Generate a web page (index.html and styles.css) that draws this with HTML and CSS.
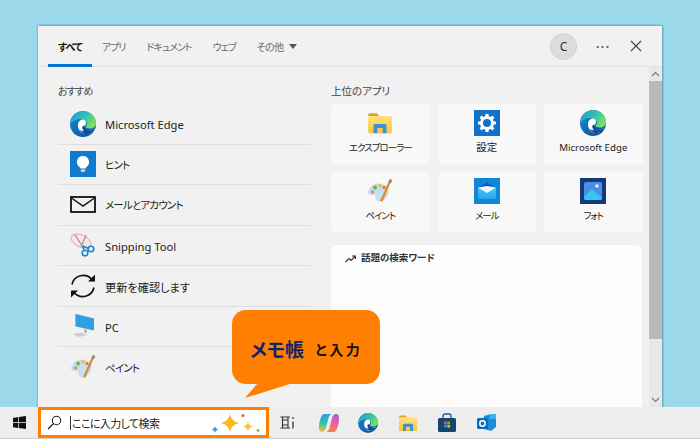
FILE: index.html
```html
<!DOCTYPE html>
<html lang="ja">
<head>
<meta charset="utf-8">
<title>検索</title>
<link rel="stylesheet" href="styles.css">
</head>
<body>
<svg class="defs" width="0" height="0" aria-hidden="true">
  <defs>
    <linearGradient id="edgeTop" x1="0" y1="0" x2="1" y2="0.6"><stop offset="0" stop-color="#1b9ad6"/><stop offset="0.55" stop-color="#35c1b0"/><stop offset="1" stop-color="#7fe05f"/></linearGradient>
    <linearGradient id="edgeBlue" x1="0" y1="0" x2="0.6" y2="1"><stop offset="0" stop-color="#1a8fd8"/><stop offset="1" stop-color="#0c59a4"/></linearGradient>
    <linearGradient id="folder" x1="0" y1="0" x2="0" y2="1"><stop offset="0" stop-color="#ffe27a"/><stop offset="1" stop-color="#fcc43e"/></linearGradient>
    <linearGradient id="mailBg" x1="0" y1="0" x2="0" y2="1"><stop offset="0" stop-color="#4cc4f4"/><stop offset="1" stop-color="#27a4ea"/></linearGradient>
    <linearGradient id="copilot" x1="0" y1="0" x2="0" y2="1"><stop offset="0" stop-color="#2f9be8"/><stop offset="0.55" stop-color="#38c8a0"/><stop offset="1" stop-color="#f7c33a"/></linearGradient>
    <linearGradient id="copilot2" x1="0" y1="0" x2="0" y2="1"><stop offset="0" stop-color="#a85be6"/><stop offset="0.55" stop-color="#f0609a"/><stop offset="1" stop-color="#f7873a"/></linearGradient>
    <symbol id="edge" viewBox="0 0 26 26">
      <circle cx="13" cy="13" r="13" fill="url(#edgeBlue)"/>
      <path d="M1 10C2.500 3.500 8 0 13 0c7 0 13 5 13 12 0 3.500-2.500 5.500-6 5.500-2.500 0-4.500-1-5-2 2-.5 2.500-2.500 1.500-4.500C15 8.500 12 7.500 9 8 5.500 8.500 2.500 10 1 13z" fill="url(#edgeTop)"/>
      <path d="M13.500 8.800c-3 0-5 2.500-5 5.700 0 4 2.300 7.800 6.500 8.800 3.500.6 7.500-1 9.500-4.800-1.300.7-2.800 1-4.300 1-3 0-5.800-1.300-6.200-4 1.300-.4 2.500-1.300 2.500-2.900 0-2.100-1.200-3.800-3-3.800z" fill="#fff" transform="translate(-.5 -.3)"/>
      <path d="M14.300 14.700c.4 3 3.300 4.500 6.400 4.500 1.400 0 2.700-.3 3.800-.9-2 3.800-6 5.400-9.500 4.800-3-.7-5-2.800-6-5.400 1 1.500 3 3 5 2.500-1.500-1-2-3.500-1.500-5z" fill="#0c4f96"/>
    </symbol>
    <symbol id="folderIcon" viewBox="0 0 24 24">
      <path d="M1 5a2 2 0 0 1 2-2h6l2.500 2.500H1z" fill="#e0a31f"/>
      <rect x="1" y="5.500" width="22" height="16" rx="1.500" fill="url(#folder)"/>
      <path d="M6 21.500v-7a1.500 1.500 0 0 1 1.500-1.500h9a1.500 1.500 0 0 1 1.500 1.500v7h-3.500v-5h-5v5z" fill="#3a92d4"/>
    </symbol>
    <symbol id="paint" viewBox="0 0 26 26">
      <path d="M1.500 13C3 7 9 4.500 15 6c4 1 6 3 6.500 6 .5 4-1.500 9-6 11-4 1.500-7-.5-7-3.500 0-2.500-1-2.500-3-2.500-3 0-5-1-4.500-4.500z" fill="#c6dff1"/>
      <circle cx="5.500" cy="14" r="1.800" fill="#ee7f7f"/>
      <circle cx="8" cy="9.500" r="1.900" fill="#62bb46"/>
      <circle cx="13" cy="7.800" r="1.900" fill="#f3bb3b"/>
      <circle cx="17" cy="9.500" r="1.500" fill="#e36b3c"/>
      <path d="M13 23L21 5l2 1-7.500 17.500z" fill="#d98e2b"/>
      <path d="M21 5l1.700-4 2.800 1.300L23 6z" fill="#a97a4e"/>
    </symbol>
  </defs>
</svg>

<main class="desktop">
  <section class="panel">
    <header class="topbar">
      <nav class="tabs">
        <span class="tab active">すべて</span>
        <span class="tab">アプリ</span>
        <span class="tab">ドキュメント</span>
        <span class="tab">ウェブ</span>
        <span class="tab">その他 <i class="caret"></i></span>
      </nav>
      <div class="actions">
        <span class="avatar">C</span>
        <span class="dots">···</span>
        <svg class="close" width="12" height="12" viewBox="0 0 12 12"><path d="M1 1l10 10M11 1L1 11" stroke="#444" stroke-width="1.100" fill="none"/></svg>
      </div>
    </header>
    <div class="content">
      <div class="left">
        <h2 class="heading left-heading">おすすめ</h2>
        <ul class="list">
          <li class="row"><svg class="row-icon" width="26" height="26"><use href="#edge"/></svg><span>Microsoft Edge</span></li>
          <li class="row">
            <svg class="row-icon" width="26" height="26" viewBox="0 0 26 26"><rect width="26" height="26" fill="#0f7bd0"/><path d="M13 5a6 6 0 0 0-3.500 10.900c.6.500.8 1 .8 1.600h5.400c0-.6.200-1.100.8-1.600A6 6 0 0 0 13 5z" fill="#fff"/><rect x="10.800" y="18.500" width="4.400" height="2.200" rx="1" fill="#d5e6f5"/></svg>
            <span class="kana">ヒント</span></li>
          <li class="row">
            <svg class="row-icon" width="26" height="26" viewBox="0 0 26 26"><rect x="1" y="5" width="24" height="15" fill="none" stroke="#111" stroke-width="1.800"/><path d="M1.500 6L13 14 24.500 6" fill="none" stroke="#111" stroke-width="1.500"/></svg>
            <span class="kana">メールとアカウント</span></li>
          <li class="row">
            <svg class="row-icon" width="26" height="26" viewBox="0 0 26 26"><ellipse cx="11" cy="9" rx="10.500" ry="6" transform="rotate(25 11 9)" fill="#fbe6e6" stroke="#f0a8a8"/><path d="M5 3l8 12M16 3L11 15" stroke="#9a9a9a" stroke-width="1.300"/><circle cx="15" cy="21" r="2.800" fill="none" stroke="#1b87d6" stroke-width="1.600"/><circle cx="21" cy="17" r="2.800" fill="none" stroke="#1b87d6" stroke-width="1.600"/><path d="M12.500 14l1.800 4.500M13 14l5.500 2.500" stroke="#1b87d6" stroke-width="1.400"/></svg>
            <span>Snipping Tool</span></li>
          <li class="row">
            <svg class="row-icon" width="26" height="26" viewBox="0 0 26 26"><path d="M2 11.500A11.500 11.500 0 0 1 22 6.500M24 14.500A11.500 11.500 0 0 1 4 19.500" fill="none" stroke="#111" stroke-width="1.700"/><path d="M25 1.500v7h-7zM1 24.500v-7h7z" fill="#111"/></svg>
            <span>更新を確認します</span></li>
          <li class="row">
            <svg class="row-icon" width="26" height="26" viewBox="0 0 26 26"><path d="M6 1l18 4.500v12L6 13.500z" fill="#2f9fe4"/><path d="M5 1h1v12.500l-1-.3z" fill="#a8b4bd"/><path d="M14 16l3 1v3l-3-.5z" fill="#a9b6bf"/><path d="M2 21l9-1.500 7 2.500-9 2z" fill="#c9d0d5"/></svg>
            <span>PC</span></li>
          <li class="row"><svg class="row-icon" width="26" height="26"><use href="#paint"/></svg><span class="kana">ペイント</span></li>
        </ul>
      </div>
      <div class="right">
        <h2 class="heading">上位のアプリ</h2>
        <div class="grid">
          <div class="card"><svg width="26" height="26"><use href="#folderIcon"/></svg><span class="tight">エクスプローラー</span></div>
          <div class="card">
            <svg width="26" height="26" viewBox="0 0 26 26"><rect width="26" height="26" fill="#0f73cc"/><circle cx="13" cy="13" r="5.500" fill="none" stroke="#fff" stroke-width="3"/><path d="M13 4v3.500M13 18.500V22M4 13h3.500M18.500 13H22M6.600 6.600l2.500 2.500M16.900 16.900l2.500 2.500M19.400 6.600l-2.500 2.500M9.100 16.900l-2.500 2.500" stroke="#fff" stroke-width="3.200"/></svg>
            <span>設定</span></div>
          <div class="card"><svg width="26" height="26"><use href="#edge"/></svg><span class="latin">Microsoft Edge</span></div>
          <div class="card"><svg width="26" height="26"><use href="#paint"/></svg><span class="tight">ペイント</span></div>
          <div class="card">
            <svg width="26" height="26" viewBox="0 0 26 26"><rect width="26" height="26" fill="#0f86d8"/><path d="M4 10l9-5.500L22 10z" fill="#0a5fae"/><rect x="4" y="10" width="18" height="11" fill="url(#mailBg)"/><path d="M4 9.500l9 5.500 9-5.500-9-1.500z" fill="#eef9fe"/></svg>
            <span class="tight">メール</span></div>
          <div class="card">
            <svg width="26" height="26" viewBox="0 0 26 26"><rect width="26" height="26" fill="#143a78"/><rect x="4" y="4" width="18" height="18" rx="2" fill="#4a8ee6"/><circle cx="17" cy="8" r="1.700" fill="#e8f4ff"/><path d="M4 19l8-8 10 9a2 2 0 0 1-2 2H6a2 2 0 0 1-2-2z" fill="#34c6f0"/></svg>
            <span class="tight">フォト</span></div>
        </div>
        <div class="trend">
          <svg width="11" height="8" viewBox="0 0 11 8"><path d="M.5 7L4 3.500 6 5.500 10 1.500M7 1h3.500v3" fill="none" stroke="#333" stroke-width="1.200"/></svg>
          <span class="trend-title">話題の検索ワード</span>
        </div>
      </div>
      <div class="scrollbar">
        <svg class="chev" width="13" height="14" viewBox="0 0 13 14"><path d="M3 9l3.500-3.500L10 9" fill="none" stroke="#777" stroke-width="1.100"/></svg>
        <div class="thumb"></div>
        <svg class="chev chev-down" width="13" height="14" viewBox="0 0 13 14"><path d="M3 5l3.500 3.500L10 5" fill="none" stroke="#777" stroke-width="1.100"/></svg>
      </div>
    </div>
  </section>
</main>

<footer class="taskbar">
  <div class="start">
    <svg width="13" height="13" viewBox="0 0 13 13"><path d="M0 1.900L5.300 1.100V6.200H0zM6 1L13 0V6.200H6zM0 6.900H5.300V12L0 11.200zM6 6.900H13V13L6 12z" fill="#111"/></svg>
  </div>
  <div class="search">
    <svg width="15" height="15" viewBox="0 0 15 15"><circle cx="9.500" cy="5.500" r="4.200" fill="none" stroke="#222" stroke-width="1.100"/><path d="M6.500 8.500L1 14" stroke="#222" stroke-width="1.200"/></svg>
    <span class="caret-bar"></span>
    <span class="search-text">ここに入力して検索</span>
    <svg class="sparkles" width="50" height="24" viewBox="0 0 50 24"><path d="M20 2.500c1 5 3.500 8.500 9.500 9.500-6 1-8.500 4.500-9.500 9.500-1-5-3.500-8.500-9.500-9.500 6-1 8.500-4.500 9.500-9.500z" fill="#fbb91f"/><path d="M38 10.500c.5 3 2 4.500 5 5-3 .5-4.500 2-5 5-.5-3-2-4.500-5-5 3-.5 4.500-2 5-5z" fill="#fbc02d"/><path d="M5 15c.4 2 1.500 3.100 3.500 3.500C6.500 18.900 5.400 20 5 22c-.4-2-1.500-3.100-3.500-3.500C3.500 18.100 4.600 17 5 15z" fill="#2a9fe8"/><circle cx="33" cy="4.500" r="1.500" fill="#ee5a2a"/><circle cx="48" cy="19.500" r="1.400" fill="#7ac143"/></svg>
  </div>
  <div class="apps">
    <svg class="taskview" width="15" height="13" viewBox="0 0 15 13"><path d="M.5 1H10M.5 12H10M2.500 1v11M8 1v11M2.500 4H8M2.500 9H8" fill="none" stroke="#333" stroke-width="1.100"/><path d="M13 1v2M13 5.500v7" stroke="#333" stroke-width="1.300"/></svg>
    <svg width="20" height="20" viewBox="0 0 20 20"><path d="M5.500 1H13c-2 .5-3 2-3.500 4L7 15c-.5 2-2 4-4 4-2 0-3-1.500-3-4C0 9 2 1 5.500 1z" fill="url(#copilot)"/><path d="M14.500 19H7c2-.5 3-2 3.500-4L13 5c.5-2 2-4 4-4 2 0 3 1.500 3 4 0 6-2 14-5.500 14z" fill="url(#copilot2)"/></svg>
    <svg width="20" height="20"><use href="#edge"/></svg>
    <svg width="20" height="20"><use href="#folderIcon"/></svg>
    <svg width="20" height="20" viewBox="0 0 20 20"><path d="M6 5V3a2 2 0 0 1 2-2h4a2 2 0 0 1 2 2v2" fill="none" stroke="#1c5e96" stroke-width="1.300"/><rect x="1" y="5" width="18" height="14" rx="1.500" fill="#14476f"/><rect x="7" y="8.500" width="2.700" height="2.700" fill="#f25022"/><rect x="10.300" y="8.500" width="2.700" height="2.700" fill="#7fba00"/><rect x="7" y="11.800" width="2.700" height="2.700" fill="#00a4ef"/><rect x="10.300" y="11.800" width="2.700" height="2.700" fill="#ffb900"/></svg>
    <svg width="21" height="20" viewBox="0 0 21 20"><path d="M8 3l7-2 5 4v9l-5 4-7-2z" fill="#1a8fd8"/><path d="M14 1h6v5h-6z" fill="#3ab4ee"/><rect x="1" y="5" width="11" height="11" rx="1.500" fill="#0a6cbe"/><circle cx="6.500" cy="10.500" r="2.700" fill="none" stroke="#fff" stroke-width="1.500"/></svg>
  </div>
</footer>

<aside class="callout">
  <strong class="callout-key">メモ帳</strong><span class="callout-rest">と入力</span>
  <svg class="callout-tail" width="50" height="16" viewBox="0 0 50 16"><path d="M13 0L0 15 48 0z" fill="#ff8000"/></svg>
</aside>
</body>
</html>
```
FILE: styles.css
```css
* { box-sizing: border-box; }
html, body { margin: 0; height: 100%; }
body {
  position: relative;
  width: 700px;
  height: 439px;
  overflow: hidden;
  display: flex;
  flex-direction: column;
  background: #9bd9ea;
  font-family: "Noto Sans", "Noto Sans CJK JP", sans-serif;
  font-feature-settings: "palt";
  color: #1c1c1c;
}
.defs { position: absolute; }
.desktop { flex: 1; min-height: 0; padding: 26px 38px 0 38px; display: flex; }
.panel {
  width: 624px;
  background: #f1f1f1;
  display: flex;
  flex-direction: column;
  box-shadow: 1px 0 2px #5f9fb3, -1px 0 1px #8bc3d4, 0 -1px 2px #70adc0;
}
.topbar {
  height: 41px;
  flex: none;
  display: flex;
  justify-content: space-between;
  border-bottom: 1px solid #e2e2e2;
  padding: 0 20px 0 10px;
}
.tabs { display: flex; align-items: stretch; margin-bottom: -1px; }
.tab {
  display: flex;
  align-items: center;
  gap: 5px;
  padding: 2px 11px 0 10px;
  font-size: 10px;
  letter-spacing: -1px;
  color: #6b6b6b;
  border-bottom: 3px solid transparent;
}
.tab.active { color: #111; font-weight: 700; letter-spacing: -.9px; padding-right: 10px; border-bottom-color: #0078d4; }
.tab:last-child { letter-spacing: -.6px; }
.caret { width: 0; height: 0; border: 4px solid transparent; border-top: 5px solid #555; border-bottom: 0; margin-left: 1px; }
.actions { display: flex; align-items: center; }
.avatar {
  width: 27px; height: 27px; border-radius: 50%;
  background: #dcdcdc; border: 1px solid #d2d2d2;
  display: flex; align-items: center; justify-content: center;
  font-size: 12px; color: #333; margin-right: 19px;
}
.dots { font-size: 12px; color: #555; width: 14px; text-align: center; margin-right: 20px; letter-spacing: 1.500px; font-weight: 700; }
.content { flex: 1; min-height: 0; display: flex; }
.left { width: 281px; flex: none; padding: 18px 0 0 20px; }
.heading { margin: 0; font-size: 10.500px; font-weight: 400; color: #444; line-height: 12px; }
.left-heading { margin-bottom: 7px; font-size: 10px; letter-spacing: -.8px; }
.list { list-style: none; margin: 0; padding: 0; width: 253px; }
.row {
  height: 40.500px;
  display: flex;
  align-items: center;
  gap: 9px;
  padding-left: 12px;
  font-size: 11.200px;
  border-bottom: 1px solid #dfdfdf;
  color: #222;
}
.row span { padding-top: 2px; }
.row .kana { font-size: 10.500px; letter-spacing: -.8px; padding-top: 0; }
.row:last-child { border-bottom: 0; }
.row-icon { flex: none; }
.right { width: 323px; flex: none; padding: 18px 0 0 12px; display: flex; flex-direction: column; }
.grid {
  margin-top: 7px;
  display: grid;
  grid-template-columns: repeat(3, 98.500px);
  grid-auto-rows: 60px;
  gap: 8px;
}
.card {
  background: #f8f8f8;
  border-radius: 4px;
  display: flex;
  flex-direction: column;
  align-items: center;
  padding-top: 6px;
  gap: 4px;
  font-size: 10.500px;
  line-height: 15px;
  color: #222;
}
.tight { font-size: 9.500px; letter-spacing: -1px; }
.latin { font-size: 9.700px; }
.trend {
  margin-top: 13px;
  flex: 1;
  background: #fdfdfd;
  border-radius: 6px 6px 0 0;
  padding: 6px 14px;
  display: flex;
  align-items: flex-start;
  gap: 5px;
}
.trend svg { margin-top: 4px; }
.trend-title { font-size: 9.500px; font-weight: 700; color: #333; line-height: 14px; }
.scrollbar {
  width: 13px;
  margin-left: 7px;
  background: #e8e8e8;
  display: flex;
  flex-direction: column;
}
.chev { flex: none; display: block; }
.thumb { height: 258px; background: #b9b9b9; flex: none; }
.chev-down { margin-top: auto; }
.taskbar {
  height: 32px;
  flex: none;
  background: #eeeeee;
  border-bottom: 1px solid #cfcfcf;
  display: flex;
  align-items: stretch;
}
.start { width: 38px; display: flex; align-items: center; justify-content: center; }
.search {
  width: 231px;
  border: 3px solid #ff8000;
  background: #fff;
  display: flex;
  align-items: center;
  padding-left: 6px;
}
.caret-bar { width: 1px; height: 14px; background: #333; margin-left: 8px; flex: none; }
.search-text { font-size: 11px; letter-spacing: -.6px; color: #222; margin-left: 1px; flex: 1; white-space: nowrap; }
.sparkles { margin-right: 6px; flex: none; }
.apps { display: flex; align-items: center; gap: 19.200px; padding-left: 11px; }
.taskview { margin-right: 5px; }
.callout {
  position: absolute;
  left: 232px; top: 310px;
  width: 148px; height: 74px;
  background: #ff8000;
  border-radius: 14px;
  display: flex;
  align-items: center;
  padding: 3px 0 0 18px;
  white-space: nowrap;
}
.callout-key { font-size: 19px; font-weight: 700; color: #12246b; }
.callout-rest { font-size: 14px; font-weight: 700; color: #111; margin-left: 11px; letter-spacing: 2.500px; }
.callout-tail { position: absolute; left: 13px; top: 73px; }
```
